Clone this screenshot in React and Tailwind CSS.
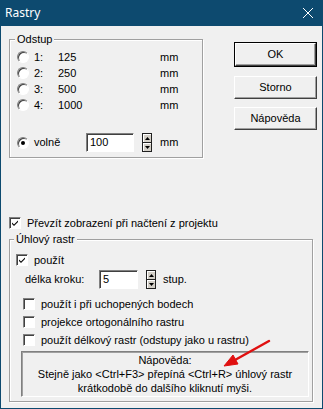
import React from 'react';

const font = { fontFamily: '"Liberation Sans", Arial, sans-serif' };

function Radio({ checked = false }) {
  return (
    <span className="relative inline-block w-[12px] h-[12px] shrink-0 rounded-full border border-[#808080] border-r-white border-b-white bg-white shadow-[inset_1px_1px_0_#404040]">
      {checked && <span className="absolute left-[3px] top-[3px] w-[4px] h-[4px] rounded-full bg-black" />}
    </span>
  );
}

function Check({ checked = false }) {
  return (
    <span className="relative inline-block w-[12px] h-[12px] shrink-0 border border-[#808080] border-r-white border-b-white bg-white shadow-[inset_1px_1px_0_#404040]">
      {checked && (
        <svg viewBox="0 0 10 10" className="absolute left-0 top-0 w-[10px] h-[10px]">
          <path d="M2 4.5 L4 6.5 L8 2.5 L8 4 L4 8 L2 6 Z" fill="#000" />
        </svg>
      )}
    </span>
  );
}

function Input({ value, w }) {
  return (
    <div className={`${w} h-[19px] shrink-0 border border-[#808080] border-r-white border-b-white bg-white shadow-[inset_1px_1px_0_#404040] pl-[3px] leading-[17px]`}>
      {value}
    </div>
  );
}

function Spinner() {
  return (
    <div className="w-[10px] h-[19px] shrink-0 flex flex-col border border-[#202020] bg-[#d4d0c8]">
      <div className="flex-1 flex items-center justify-center border-b border-[#202020] shadow-[inset_1px_1px_0_#fff]">
        <svg viewBox="0 0 5 3" className="w-[5px] h-[3px]"><path d="M2.5 0 L5 3 L0 3 Z" fill="#000" /></svg>
      </div>
      <div className="flex-1 flex items-center justify-center shadow-[inset_1px_1px_0_#fff]">
        <svg viewBox="0 0 5 3" className="w-[5px] h-[3px]"><path d="M0 0 L5 0 L2.5 3 Z" fill="#000" /></svg>
      </div>
    </div>
  );
}

function Button({ children, def = false, className = '' }) {
  return (
    <div className={`${className} w-[83px] ${def ? 'h-[25px] border border-black' : 'h-[23px]'} bg-[#f0f0f0]`}>
      <div className="w-full h-full flex items-center justify-center border border-white border-r-[#404040] border-b-[#404040] shadow-[inset_-1px_-1px_0_#a0a0a0]">
        {children}
      </div>
    </div>
  );
}

function Group({ label, className, labelClass, children }) {
  return (
    <div className={`relative border border-[#a0a0a0] shadow-[inset_1px_1px_0_#fff,1px_1px_0_#fff] ${className}`}>
      <span className={`absolute -top-[8px] ${labelClass} bg-[#f0f0f0] px-[2px] leading-[14px]`}>{label}</span>
      {children}
    </div>
  );
}

const rows = [
  ['1:', '125'],
  ['2:', '250'],
  ['3:', '500'],
  ['4:', '1000'],
];

export default function App() {
  return (
    <div className="w-[323px] h-[409px] bg-[#0d4a6f] flex flex-col text-[11px] text-black" style={font}>
      {/* title bar */}
      <div className="h-[26px] shrink-0 flex items-center justify-between pl-[5px] pr-[10px] text-white">
        <span className="text-[12px] font-['Noto_Sans',sans-serif]">Rastry</span>
        <svg viewBox="0 0 10 10" className="w-[10px] h-[10px]">
          <path d="M0 0 L10 10 M10 0 L0 10" stroke="#fff" strokeWidth="1" />
        </svg>
      </div>

      <div className="flex-1 mx-px mb-px bg-[#f0f0f0] flex flex-col">
        <div className="flex items-start">
          <Group label="Odstup" className="ml-[8px] mt-[13px] w-[194px] h-[119px]" labelClass="left-[5px]">
            <div className="pt-[9px] pl-[7px] flex flex-col">
              {rows.map(([n, v]) => (
                <div key={n} className="h-[16px] flex items-center">
                  <Radio />
                  <span className="ml-[5px] w-[24px]">{n}</span>
                  <span className="w-[102px]">{v}</span>
                  <span>mm</span>
                </div>
              ))}
              <div className="mt-[20px] h-[19px] flex items-center">
                <Radio checked />
                <span className="ml-[5px] w-[52px]">volně</span>
                <Input value="100" w="w-[48px]" />
                <span className="ml-[8px]"><Spinner /></span>
                <span className="ml-[8px]">mm</span>
              </div>
            </div>
          </Group>

          <div className="ml-[31px] mt-[16px] flex flex-col">
            <Button def>OK</Button>
            <Button className="mt-[9px]">Storno</Button>
            <Button className="mt-[8px]">Nápověda</Button>
          </div>
        </div>

        <div className="mt-[58px] ml-[8px] h-[14px] flex items-center">
          <Check checked />
          <span className="ml-[6px]">Převzít zobrazení při načtení z projektu</span>
        </div>

        <Group label="Úhlový rastr" className="ml-[8px] mt-[9px] w-[304px] h-[163px]" labelClass="left-[4px]">
          <div className="flex flex-col">
            <div className="mt-[13px] ml-[6px] h-[14px] flex items-center">
              <Check checked />
              <span className="ml-[6px]">použít</span>
            </div>
            <div className="mt-[3px] ml-[15px] h-[19px] flex items-center">
              <span className="w-[74px]">délka kroku:</span>
              <Input value="5" w="w-[39px]" />
              <span className="ml-[8px]"><Spinner /></span>
              <span className="ml-[7px]">stup.</span>
            </div>
            <div className="mt-[8px] ml-[13px] h-[14px] flex items-center">
              <Check />
              <span className="ml-[6px]">použít i při uchopených bodech</span>
            </div>
            <div className="mt-[4px] ml-[13px] h-[14px] flex items-center">
              <Check />
              <span className="ml-[6px]">projekce ortogonálního rastru</span>
            </div>
            <div className="mt-[4px] ml-[13px] h-[14px] flex items-center">
              <Check />
              <span className="ml-[6px]">použít délkový rastr (odstupy jako u rastru)</span>
            </div>
            <div className="relative mt-[4px] ml-[11px] w-[288px] h-[46px] border border-[#808080] border-r-white border-b-white shadow-[inset_1px_1px_0_#a0a0a0] flex flex-col items-center justify-center leading-[14px] text-center">
              <span>Nápověda:</span>
              <span>Stejně jako &lt;Ctrl+F3&gt; přepíná &lt;Ctrl+R&gt; úhlový rastr</span>
              <span>krátkodobě do dalšího kliknutí myši.</span>
              {/* red annotation arrow */}
              <svg className="absolute left-[182px] -top-[22px] w-[70px] h-[40px] overflow-visible" viewBox="0 0 70 40">
                <path d="M65 11 L31 30" stroke="#e01010" strokeWidth="2.5" strokeLinecap="round" fill="none" />
                <path d="M20 36 L34 34 L29 25 Z" fill="#e01010" stroke="#e01010" strokeWidth="1" strokeLinejoin="round" />
              </svg>
            </div>
          </div>
        </Group>
      </div>
    </div>
  );
}
